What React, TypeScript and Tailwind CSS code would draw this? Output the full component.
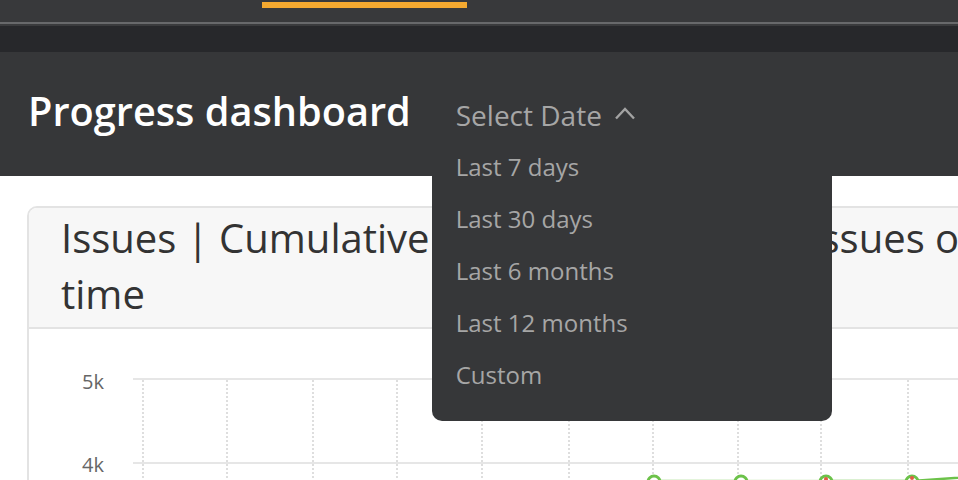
import React from "react";

const options = ["Last 7 days", "Last 30 days", "Last 6 months", "Last 12 months", "Custom"];
const gridX = [114, 198, 284, 368, 453, 540, 624, 709, 792, 879, 964, 1049];

function ChevronUp() {
  return (
    <svg width="22" height="14" viewBox="0 0 22 14" className="ml-[12px] self-center mt-[-4px]">
      <path d="M2 12.5 L11 3 L20 12.5" fill="none" stroke="#a3a3a3" strokeWidth="2.4" />
    </svg>
  );
}

function Chart() {
  return (
    <svg width="1100" height="180" className="block">
      <line x1="104" y1="50" x2="1100" y2="50" stroke="#e6e6e6" strokeWidth="2" />
      <line x1="104" y1="134" x2="1100" y2="134" stroke="#e6e6e6" strokeWidth="2" />
      {gridX.map((x) => (
        <line key={x} x1={x} y1="51" x2={x} y2="180" stroke="#dedede" strokeWidth="2" strokeDasharray="2 2" />
      ))}
      <text x="75" y="60" textAnchor="end" fontSize="20" fill="#666" fontFamily="'Open Sans', sans-serif">5k</text>
      <text x="75" y="143" textAnchor="end" fontSize="20" fill="#666" fontFamily="'Open Sans', sans-serif">4k</text>
      <polyline points="625,152 712,152" fill="none" stroke="#8ed26f" strokeWidth="2.5" />
      <polyline points="712,152 797,152" fill="none" stroke="#c5e8b3" strokeWidth="2.5" />
      <polyline points="797,152 883,152 968,146 1060,140" fill="none" stroke="#6cc24a" strokeWidth="2.5" />
      {[625, 712, 797, 883].map((x) => (
        <circle key={x} cx={x} cy="153" r="6" fill="#fff" stroke="#6cc24a" strokeWidth="3" />
      ))}
      <circle cx="797" cy="150" r="2" fill="#e25b45" />
      <circle cx="883" cy="149" r="2" fill="#e25b45" />
    </svg>
  );
}

export default function App() {
  return (
    <div className="w-[958px] h-[480px] overflow-hidden bg-white font-['Open_Sans',sans-serif]">
      {/* top nav strip */}
      <div className="h-[22px] bg-[#38393b] pt-[2px]">
        <div className="ml-[262px] w-[205px] h-[6px] bg-[#f4a930]" />
      </div>
      <div className="h-[2px] bg-[#68696b]" />
      <div className="h-[2px] bg-[#3a3b3d]" />
      <div className="h-[26px] bg-[#27282b]" />

      {/* page header */}
      <div className="relative z-10 h-[124px] bg-[#363739] flex items-baseline pl-[28px] pt-[31px]">
        <h1 className="text-[39.7px] leading-[56px] font-semibold text-white shrink-0">Progress dashboard</h1>
        <div className="relative ml-[45px] flex items-baseline">
          <span className="text-[28px] leading-[40px] text-[#a6a6a6]">Select Date</span>
          <ChevronUp />
          <div className="absolute left-[-24px] top-full w-[400px] pt-[6px] pb-[20px] bg-[#363739] rounded-b-[10px]">
            {options.map((o) => (
              <div key={o} className="pl-[24px] text-[24px] leading-[52px] text-[#a6a6a6]">{o}</div>
            ))}
          </div>
        </div>
      </div>

      {/* card */}
      <div className="pt-[30px] pl-[27px]">
        <div className="w-[1100px] border-2 border-[#e3e3e3] rounded-t-[10px] overflow-hidden">
          <div className="bg-[#f7f7f7] border-b-2 border-[#e3e3e3] pl-[32px] pr-[31px] pt-[2px] pb-[5px]">
            <h2 className="text-[40px] leading-[56px] text-[#333]">
              Issues | Cumulative created vs resolved issues over time
            </h2>
          </div>
          <div className="bg-white">
            <Chart />
          </div>
        </div>
      </div>
    </div>
  );
}
